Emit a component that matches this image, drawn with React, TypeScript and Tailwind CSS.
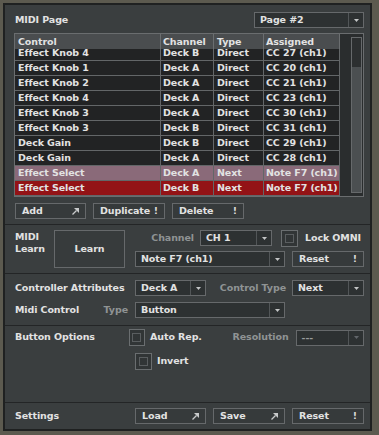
import React from 'react';

type Row = {
    control: string;
    channel: string;
    type: string;
    assigned: string;
    tone?: 'soft' | 'active';
};

const rows: Row[] = [
    { control: 'Effect Knob 4', channel: 'Deck B', type: 'Direct', assigned: 'CC 27 (ch1)' },
    { control: 'Effect Knob 1', channel: 'Deck A', type: 'Direct', assigned: 'CC 20 (ch1)' },
    { control: 'Effect Knob 2', channel: 'Deck A', type: 'Direct', assigned: 'CC 21 (ch1)' },
    { control: 'Effect Knob 4', channel: 'Deck A', type: 'Direct', assigned: 'CC 23 (ch1)' },
    { control: 'Effect Knob 3', channel: 'Deck A', type: 'Direct', assigned: 'CC 30 (ch1)' },
    { control: 'Effect Knob 3', channel: 'Deck B', type: 'Direct', assigned: 'CC 31 (ch1)' },
    { control: 'Deck Gain', channel: 'Deck B', type: 'Direct', assigned: 'CC 29 (ch1)' },
    { control: 'Deck Gain', channel: 'Deck A', type: 'Direct', assigned: 'CC 28 (ch1)' },
    { control: 'Effect Select', channel: 'Deck A', type: 'Next', assigned: 'Note F7 (ch1)', tone: 'soft' },
    { control: 'Effect Select', channel: 'Deck B', type: 'Next', assigned: 'Note F7 (ch1)', tone: 'active' },
];

function Arrow({ dim }: { dim?: boolean }) {
    return (
        <svg width="5" height="3" viewBox="0 0 5 3">
            <path d="M0 0h5L2.5 3z" fill={dim ? '#62666a' : '#c4c6c7'} />
        </svg>
    );
}

function OpenIcon() {
    return (
        <svg width="7" height="7" viewBox="0 0 7 7">
            <path d="M2 0h5v5z" fill="#c8cacb" />
            <path d="M0.5 6.5L4.5 2.5" stroke="#c8cacb" strokeWidth="1.2" />
        </svg>
    );
}

function Select({ value, className, dim }: { value: string; className: string; dim?: boolean }) {
    return (
        <div className={`flex h-[16px] items-stretch border border-[#66696b] bg-[#2d3132] ${className}`}>
            <span className={`flex flex-1 items-center pl-[5px] leading-none ${dim ? 'text-[#9a9d9e]' : 'text-[#e2e2e2]'}`}>
                {value}
            </span>
            <span className="flex w-[15px] items-center justify-center border-l border-[#525658]">
                <Arrow dim={dim} />
            </span>
        </div>
    );
}

function Button({ label, icon, className }: { label: string; icon?: 'open' | 'warn'; className: string }) {
    return (
        <div className={`flex h-[16px] items-center justify-between border border-[#66696b] bg-[#363a3b] pl-[6px] pr-[6px] leading-none ${className}`}>
            <span>{label}</span>
            {icon === 'open' && <OpenIcon />}
            {icon === 'warn' && <span className="text-[#d8d8d8]">!</span>}
        </div>
    );
}

function Check() {
    return (
        <div className="flex h-[17px] w-[17px] items-center justify-center border border-[#6a6e70] bg-[#313536]">
            <div className="h-[9px] w-[9px] border border-[#5a5e60]" />
        </div>
    );
}

export default function App() {
    return (
        <div className="h-[435px] w-[379px] bg-[#5c5a4f] pb-[4px] pl-[3px] pr-[7px] pt-[3px] font-['DejaVu_Sans',sans-serif] text-[9.5px] font-bold tracking-[-0.1px] text-[#e2e2e2]">
            <div className="flex h-full flex-col border-2 border-[#1f2121] bg-[#3a3e3f]">
                {/* MIDI page + table */}
                <section className="flex h-[220px] flex-col border-b border-[#232526] pl-[9px] pr-[6px] pt-[7px]">
                    <div className="flex h-[16px] items-center justify-between">
                        <span className="pl-[1px]">MIDI Page</span>
                        <Select value="Page #2" className="w-[110px]" />
                    </div>

                    <div className="mt-[5px] flex h-[164px] border border-[#6a6d6f] bg-[#2a2d2e]">
                        <div className="flex w-[325px] flex-col">
                            <div className="flex h-[15px] bg-[#4a4d4f] leading-none">
                                <div className="flex w-[146px] items-center border-r border-[#6b6e70] pl-[3px]">Control</div>
                                <div className="flex w-[53px] items-center border-r border-[#6b6e70] pl-[2px]">Channel</div>
                                <div className="flex w-[50px] items-center border-r border-[#6b6e70] pl-[3px]">Type</div>
                                <div className="flex w-[76px] items-center border-r border-[#6b6e70] pl-[2px]">Assigned</div>
                            </div>
                            <div className="h-[147px] overflow-hidden">
                                <div className="-mt-[3px]">
                                    {rows.map((r, i) => (
                                        <div
                                            key={i}
                                            className={`flex h-[15px] border-b border-[#636668] leading-none ${
                                                r.tone === 'soft'
                                                    ? 'bg-[#8a6a79]'
                                                    : r.tone === 'active'
                                                    ? 'bg-[#931316]'
                                                    : 'bg-[#222324]'
                                            }`}
                                        >
                                            <div className="flex w-[146px] items-center border-r border-[#636668] pl-[3px]">{r.control}</div>
                                            <div className="flex w-[53px] items-center border-r border-[#636668] pl-[2px]">{r.channel}</div>
                                            <div className="flex w-[50px] items-center border-r border-[#636668] pl-[3px]">{r.type}</div>
                                            <div className="flex w-[76px] items-center whitespace-nowrap border-r border-[#636668] pl-[2px]">{r.assigned}</div>
                                        </div>
                                    ))}
                                </div>
                            </div>
                        </div>
                        <div className="flex flex-1 justify-end py-[3px] pr-[1px]">
                            <div className="flex w-[11px] flex-col border border-[#66696b] bg-[#2c2f30]">
                                <div className="h-[29px]" />
                                <div className="flex-1 bg-[#4b4f51]" />
                            </div>
                        </div>
                    </div>

                    <div className="mt-[6px] flex gap-[7px] pl-[1px]">
                        <Button label="Add" icon="open" className="w-[71px]" />
                        <Button label="Duplicate" icon="warn" className="w-[72px]" />
                        <Button label="Delete" icon="warn" className="w-[72px]" />
                    </div>
                </section>

                {/* MIDI learn */}
                <section className="flex h-[49px] border-b border-[#232526] pl-[10px] pr-[6px] pt-[5px]">
                    <div className="w-[39px] pt-[1px] leading-[12px]">
                        <div>MIDI</div>
                        <div>Learn</div>
                    </div>
                    <div className="flex h-[38px] w-[71px] items-center justify-center border border-[#66696b] bg-[#373b3c]">
                        Learn
                    </div>
                    <div className="ml-[10px] flex flex-1 flex-col gap-[5px]">
                        <div className="flex h-[16px] items-center">
                            <span className="w-[65px] pr-[6px] text-right text-[#8f9394]">Channel</span>
                            <Select value="CH 1" className="w-[72px]" />
                            <div className="ml-[9px]">
                                <Check />
                            </div>
                            <span className="ml-[7px]">Lock OMNI</span>
                        </div>
                        <div className="flex gap-[7px]">
                            <Select value="Note F7 (ch1)" className="w-[150px]" />
                            <Button label="Reset" icon="warn" className="w-[72px]" />
                        </div>
                    </div>
                </section>

                {/* Controller attributes */}
                <section className="flex h-[52px] flex-col gap-[6px] border-b border-[#232526] pl-[10px] pr-[6px] pt-[6px]">
                    <div className="flex h-[16px] items-center">
                        <span className="w-[120px]">Controller Attributes</span>
                        <Select value="Deck A" className="w-[71px]" />
                        <span className="w-[86px] pr-[6px] text-right text-[#8f9394]">Control Type</span>
                        <Select value="Next" className="w-[72px]" />
                    </div>
                    <div className="flex h-[16px] items-center">
                        <span className="flex w-[120px] justify-between pr-[7px]">
                            <span>Midi Control</span>
                            <span className="text-[#8f9394]">Type</span>
                        </span>
                        <Select value="Button" className="w-[150px]" />
                    </div>
                </section>

                {/* Button options */}
                <section className="flex h-[77px] flex-col gap-[7px] border-b border-[#232526] pl-[10px] pr-[6px] pt-[3px]">
                    <div className="flex h-[17px] items-center">
                        <span className="w-[120px]">Button Options</span>
                        <Check />
                        <span className="ml-[5px] w-[60px]">Auto Rep.</span>
                        <span className="w-[93px] pr-[7px] text-right text-[#8f9394]">Resolution</span>
                        <Select value="---" className="w-[72px]" dim />
                    </div>
                    <div className="flex h-[17px] items-center">
                        <span className="w-[120px]" />
                        <Check />
                        <span className="ml-[5px]">Invert</span>
                    </div>
                </section>

                {/* Settings */}
                <section className="flex flex-1 items-start pl-[10px] pr-[6px] pt-[5px]">
                    <div className="flex h-[16px] w-[120px] items-center">Settings</div>
                    <div className="flex gap-[7px]">
                        <Button label="Load" icon="open" className="w-[71px]" />
                        <Button label="Save" icon="open" className="w-[72px]" />
                        <Button label="Reset" icon="warn" className="w-[72px]" />
                    </div>
                </section>
            </div>
        </div>
    );
}
